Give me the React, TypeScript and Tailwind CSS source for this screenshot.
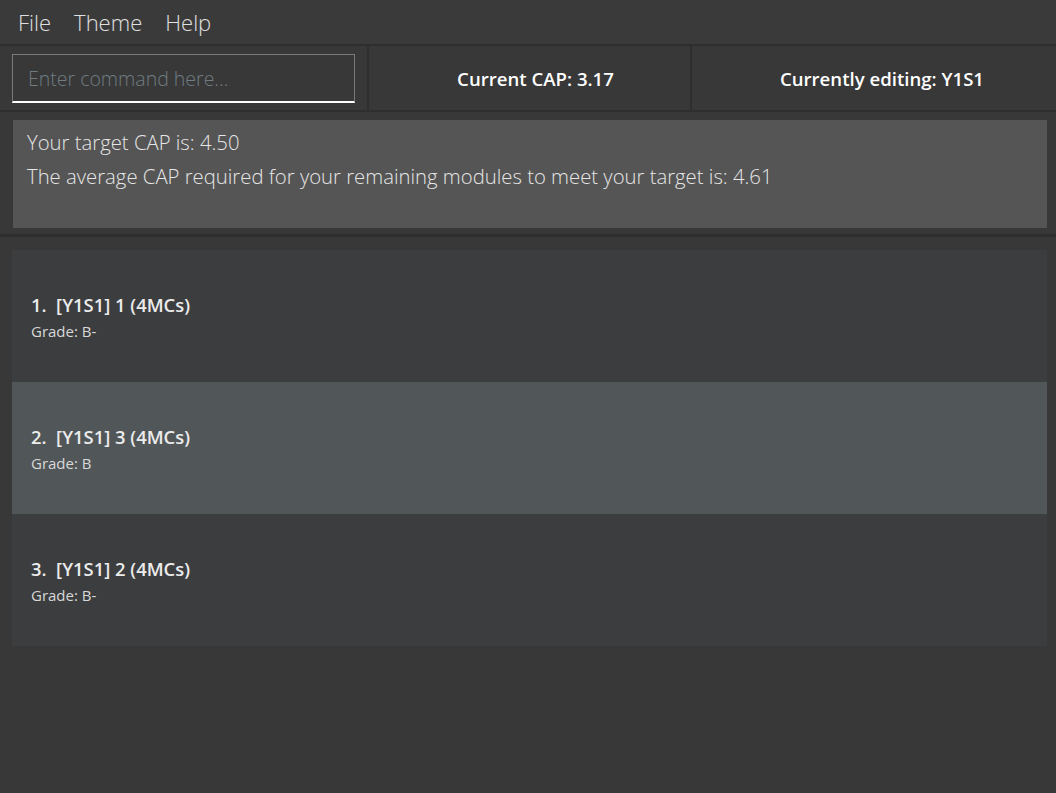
const modules = [
  { code: "[Y1S1] 1 (4MCs)", grade: "B-", selected: false },
  { code: "[Y1S1] 3 (4MCs)", grade: "B", selected: true },
  { code: "[Y1S1] 2 (4MCs)", grade: "B-", selected: false },
];

export default function App() {
  return (
    <div
      className="flex h-[793px] w-[1056px] flex-col overflow-hidden bg-[#383838] text-[#e0e0e0]"
      style={{ fontFamily: '"Open Sans", "Noto Sans", sans-serif' }}
    >
      {/* Menu bar */}
      <div className="flex h-[44px] items-center gap-[23px] bg-[#3a3a3a] px-[18px] text-[22px] font-light">
        <span>File</span>
        <span>Theme</span>
        <span>Help</span>
      </div>
      <div className="h-[2px] bg-[#2e2e2e]" />

      {/* Command row */}
      <div className="flex h-[64px]">
        <div className="flex w-[367px] items-center pl-[12px] pr-[12px]">
          <div className="flex h-[49px] w-[343px] items-center border border-b-2 border-[#7a7a7a] border-b-white bg-[#383838] px-[15px] pt-[2px]">
            <span className="text-[19.5px] font-light text-[#6f7c82]">Enter command here...</span>
          </div>
        </div>
        <div className="w-[2px] bg-[#2e2e2e]" />
        <div className="flex w-[321px] items-center justify-center pl-[12px] pt-[2px] text-[18.6px] font-semibold text-white">
          Current CAP: 3.17
        </div>
        <div className="w-[2px] bg-[#2e2e2e]" />
        <div className="flex flex-1 items-center justify-center pl-[16px] pt-[2px] text-[18.6px] font-semibold text-white">
          Currently editing: Y1S1
        </div>
      </div>
      <div className="h-[2px] bg-[#2e2e2e]" />

      {/* Result display */}
      <div className="flex h-[122px] pl-[13px] pr-[9px] pt-[8px] pb-[6px]">
        <div className="flex-1 bg-[#555555] px-[14px] pt-[5px] text-[20.3px] font-light leading-[34px] text-[#e6e6e6]">
          <div>Your target CAP is: 4.50</div>
          <div>The average CAP required for your remaining modules to meet your target is: 4.61</div>
        </div>
      </div>
      <div className="h-[3px] bg-[#2e2e2e]" />

      {/* Module list */}
      <div className="flex flex-col pl-[12px] pr-[9px] pt-[13px]">
        {modules.map((m, i) => (
          <div
            key={i}
            className={
              "flex h-[132px] flex-col justify-center pl-[19px] pt-[4px] " +
              (m.selected ? "bg-[#515658]" : "bg-[#3c3d3f]")
            }
          >
            <div className="text-[18.4px] font-semibold leading-[26px] text-[#ececec]">
              {i + 1}.&nbsp;&nbsp;{m.code}
            </div>
            <div className="text-[15px] leading-[26px] text-[#d8d8d8]">Grade: {m.grade}</div>
          </div>
        ))}
      </div>
    </div>
  );
}
